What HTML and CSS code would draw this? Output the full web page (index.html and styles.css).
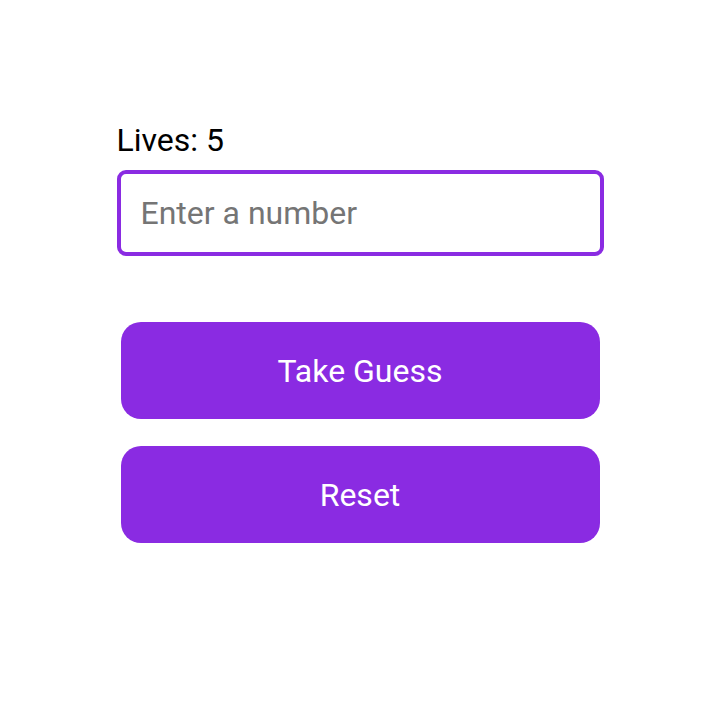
FILE: index.html
```html
<!DOCTYPE html>
<html>
<head>
<meta charset="utf-8">
<link rel="stylesheet" href="styles.css">
</head>
<body>
<main class="game">
  <div class="lives">Lives: 5</div>
  <input class="guess-input" type="text" placeholder="Enter a number">
  <div class="actions">
    <button class="btn">Take Guess</button>
    <button class="btn">Reset</button>
  </div>
</main>
</body>
</html>
```
FILE: styles.css
```css
html, body {
  margin: 0;
  padding: 0;
  background: #ffffff;
}
body {
  font-family: Roboto, "Noto Sans", sans-serif;
  width: 720px;
  height: 722px;
}
.game {
  width: 487px;
  margin: 0 auto;
  padding-top: 122px;
  display: flex;
  flex-direction: column;
}
.lives {
  font-size: 32px;
  line-height: 36px;
  color: #000;
}
.guess-input {
  margin-top: 12px;
  box-sizing: border-box;
  width: 487px;
  height: 86px;
  border: 4px solid #8a2be2;
  border-radius: 9px;
  padding: 0 20px;
  font-family: Roboto, sans-serif;
  font-size: 32px;
  color: #000;
  outline: none;
  background: #fff;
}
.guess-input::placeholder {
  color: #757575;
}
.actions {
  margin: 66px 4px 0;
  display: flex;
  flex-direction: column;
  gap: 27px;
}
.btn {
  height: 97px;
  border: none;
  border-radius: 20px;
  background: #8a2be2;
  color: #fff;
  font-family: Roboto, sans-serif;
  font-size: 32px;
  cursor: pointer;
}
```
